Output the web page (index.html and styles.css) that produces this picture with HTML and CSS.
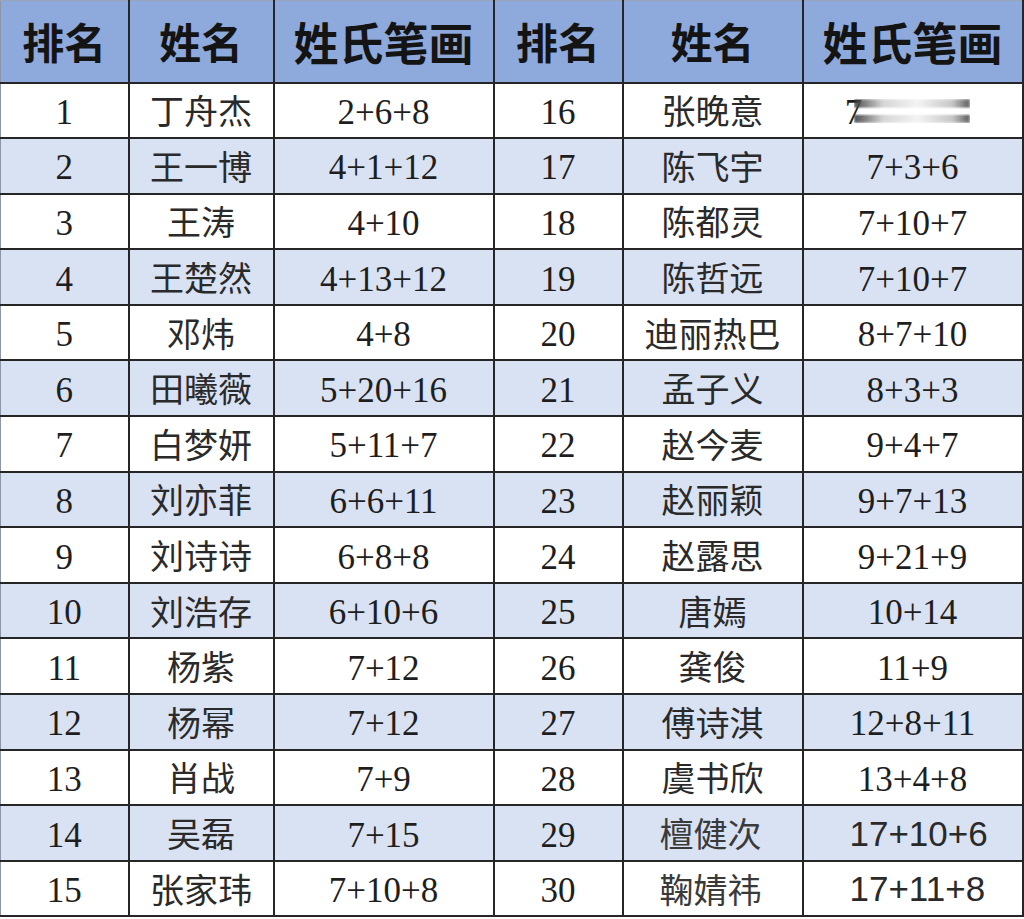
FILE: index.html
```html
<!DOCTYPE html>
<html lang="zh">
<head>
<meta charset="utf-8">
<link rel="stylesheet" href="styles.css">
</head>
<body>
<table class="rank">
<colgroup>
<col class="c1"><col class="c2"><col class="c3"><col class="c4"><col class="c5"><col class="c6">
</colgroup>
<thead>
<tr><th>排名</th><th>姓名</th><th>姓氏笔画</th><th>排名</th><th>姓名</th><th>姓氏笔画</th></tr>
</thead>
<tbody>
<tr><td class="n">1</td><td class="z">丁舟杰</td><td class="n">2+6+8</td><td class="n">16</td><td class="z">张晚意</td><td class="n"><span class="blurwrap">7<span class="blur"></span></span></td></tr>
<tr><td class="n">2</td><td class="z">王一博</td><td class="n">4+1+12</td><td class="n">17</td><td class="z">陈飞宇</td><td class="n">7+3+6</td></tr>
<tr><td class="n">3</td><td class="z">王涛</td><td class="n">4+10</td><td class="n">18</td><td class="z">陈都灵</td><td class="n">7+10+7</td></tr>
<tr><td class="n">4</td><td class="z">王楚然</td><td class="n">4+13+12</td><td class="n">19</td><td class="z">陈哲远</td><td class="n">7+10+7</td></tr>
<tr><td class="n">5</td><td class="z">邓炜</td><td class="n">4+8</td><td class="n">20</td><td class="z">迪丽热巴</td><td class="n">8+7+10</td></tr>
<tr><td class="n">6</td><td class="z">田曦薇</td><td class="n">5+20+16</td><td class="n">21</td><td class="z">孟子义</td><td class="n">8+3+3</td></tr>
<tr><td class="n">7</td><td class="z">白梦妍</td><td class="n">5+11+7</td><td class="n">22</td><td class="z">赵今麦</td><td class="n">9+4+7</td></tr>
<tr><td class="n">8</td><td class="z">刘亦菲</td><td class="n">6+6+11</td><td class="n">23</td><td class="z">赵丽颖</td><td class="n">9+7+13</td></tr>
<tr><td class="n">9</td><td class="z">刘诗诗</td><td class="n">6+8+8</td><td class="n">24</td><td class="z">赵露思</td><td class="n">9+21+9</td></tr>
<tr><td class="n">10</td><td class="z">刘浩存</td><td class="n">6+10+6</td><td class="n">25</td><td class="z">唐嫣</td><td class="n">10+14</td></tr>
<tr><td class="n">11</td><td class="z">杨紫</td><td class="n">7+12</td><td class="n">26</td><td class="z">龚俊</td><td class="n">11+9</td></tr>
<tr><td class="n">12</td><td class="z">杨幂</td><td class="n">7+12</td><td class="n">27</td><td class="z">傅诗淇</td><td class="n">12+8+11</td></tr>
<tr><td class="n">13</td><td class="z">肖战</td><td class="n">7+9</td><td class="n">28</td><td class="z">虞书欣</td><td class="n">13+4+8</td></tr>
<tr><td class="n">14</td><td class="z">吴磊</td><td class="n">7+15</td><td class="n">29</td><td class="z pasted">檀健次</td><td class="s">17+10+6</td></tr>
<tr><td class="n">15</td><td class="z">张家玮</td><td class="n">7+10+8</td><td class="n">30</td><td class="z pasted">鞠婧祎</td><td class="s">17+11+8</td></tr>
</tbody>
</table>
</body>
</html>
```
FILE: styles.css
```css
html, body {
  margin: 0;
  padding: 0;
  background: #ffffff;
}
.rank {
  border-collapse: collapse;
  table-layout: fixed;
  width: 1022px;
  color: #1e1e1e;
}
.c1 { width: 128px; }
.c2 { width: 145px; }
.c3 { width: 220px; }
.c4 { width: 129px; }
.c5 { width: 180px; }
.c6 { width: 220px; }
.rank th, .rank td {
  border: 2px solid #262626;
  text-align: center;
  vertical-align: middle;
  padding: 0;
  overflow: hidden;
  white-space: nowrap;
}
.rank thead tr {
  height: 82px;
}
.rank tbody tr {
  height: 55.6px;
}
.rank thead th {
  background: #8eaadc;
  font-family: "Noto Sans CJK SC", sans-serif;
  font-weight: 700;
  font-size: 42px;
  color: #141414;
  line-height: 1;
  border-top-color: #9aa4b8;
  border-top-width: 1px;
}
.rank thead th:nth-child(3), .rank thead th:nth-child(6) {
  font-size: 45px;
}
.rank th:first-child, .rank td:first-child {
  border-left: 1px solid #8d96a8;
}
.rank tbody td {
  line-height: 1;
}
.rank tbody tr:nth-child(even) td {
  background: #d9e2f3;
}
.n {
  font-family: "Liberation Serif", serif;
  font-size: 35px;
  color: #1e1e1e;
  padding-top: 4px !important;
}
.z {
  font-family: "Noto Sans CJK SC", sans-serif;
  font-size: 34px;
  color: #2a2a2a;
}
.s {
  font-family: "Liberation Sans", sans-serif;
  font-size: 35px;
  color: #2a2a2a;
  text-align: left !important;
  padding-left: 46px !important;
}
.pasted {
  color: #3a3a3a;
  text-align: left !important;
  padding-left: 36px !important;
}
.blurwrap {
  display: inline-flex;
  align-items: center;
  margin-left: -10px;
}
.blur {
  display: inline-block;
  width: 116px;
  height: 24px;
  margin-left: -8px;
  margin-top: -2px;
  background:
    linear-gradient(to bottom, transparent 0%, transparent 8%, rgba(255,255,255,0) 8%, transparent 100%),
    linear-gradient(to right, #2e2e2e 0%, #cfcfcf 25%, #f2f2f2 55%, #bdbdbd 85%, #404040 100%);
  -webkit-mask: linear-gradient(to bottom, #000 0%, #000 30%, transparent 42%, transparent 60%, #000 72%, #000 100%);
  mask: linear-gradient(to bottom, #000 0%, #000 30%, transparent 42%, transparent 60%, #000 72%, #000 100%);
  filter: blur(1.5px);
  opacity: 0.85;
}
```
